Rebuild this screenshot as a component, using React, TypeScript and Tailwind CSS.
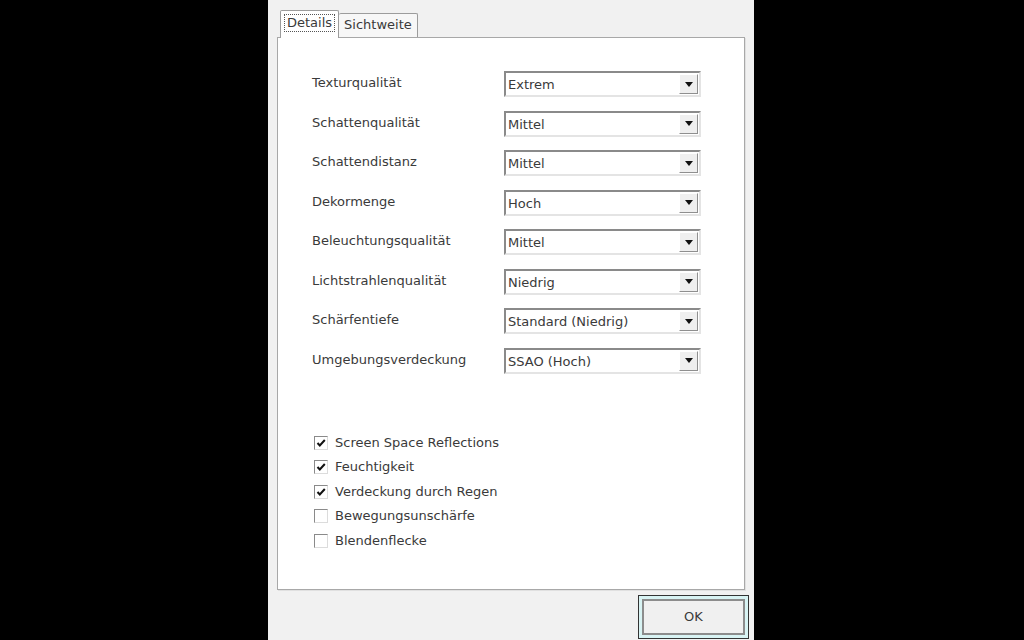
import React from 'react';

const selects: Array<{ label: string; value: string }> = [
  { label: 'Texturqualität', value: 'Extrem' },
  { label: 'Schattenqualität', value: 'Mittel' },
  { label: 'Schattendistanz', value: 'Mittel' },
  { label: 'Dekormenge', value: 'Hoch' },
  { label: 'Beleuchtungsqualität', value: 'Mittel' },
  { label: 'Lichtstrahlenqualität', value: 'Niedrig' },
  { label: 'Schärfentiefe', value: 'Standard (Niedrig)' },
  { label: 'Umgebungsverdeckung', value: 'SSAO (Hoch)' },
];

const checks: Array<{ label: string; checked: boolean }> = [
  { label: 'Screen Space Reflections', checked: true },
  { label: 'Feuchtigkeit', checked: true },
  { label: 'Verdeckung durch Regen', checked: true },
  { label: 'Bewegungsunschärfe', checked: false },
  { label: 'Blendenflecke', checked: false },
];

const Dropdown: React.FC<{ value: string }> = ({ value }) => (
  <div className="w-[197px] h-[26px] flex border-2 border-t-[#8a8a8a] border-l-[#8a8a8a] border-b-[#e4e4e4] border-r-[#e4e4e4] bg-white">
    <div className="flex-1 flex items-center pl-[2px] pt-[2px] text-[13px] text-[#3a3a3a]">{value}</div>
    <div className="w-[19px] m-[1px] flex items-center justify-center bg-[#efefef] border border-t-white border-l-white border-b-[#8f8f8f] border-r-[#8f8f8f]">
      <svg width="8" height="5" viewBox="0 0 8 5">
        <path d="M0 0h8L4 5z" fill="#111" />
      </svg>
    </div>
  </div>
);

const CheckBox: React.FC<{ checked: boolean }> = ({ checked }) => (
  <div className="w-[14px] h-[14px] border border-t-[#8a8a8a] border-l-[#8a8a8a] border-b-[#dcdcdc] border-r-[#dcdcdc] bg-white flex items-center justify-center">
    {checked && (
      <svg width="10" height="10" viewBox="0 0 10 10">
        <path d="M1.5 5l2.3 2.5L8.8 2" fill="none" stroke="#111" strokeWidth="2" />
      </svg>
    )}
  </div>
);

export default function App() {
  return (
    <div className="w-[1024px] h-[640px] bg-black flex" style={{ fontFamily: '"DejaVu Sans", Tahoma, sans-serif' }}>
      <div className="ml-[268px] w-[486px] h-full bg-[#f1f1f1] flex flex-col px-[9px]">
        {/* Tabs */}
        <div className="flex items-end h-[37px] pl-[3px] relative z-10">
          <div className="h-[28px] bg-white border border-b-0 border-[#9c9c9c] rounded-t-[2px] px-[3px] pt-[3px] mb-[-1px]">
            <div className="border border-dotted border-[#555] px-[2px] text-[13px] text-[#3a3a3a] leading-[16px]">Details</div>
          </div>
          <div className="h-[24px] bg-[#f7f7f7] border border-b-0 border-l-0 border-[#9c9c9c] rounded-t-[2px] px-[5px] pt-[3px] text-[13px] text-[#3a3a3a] leading-[16px]">
            Sichtweite
          </div>
        </div>

        {/* Tab panel */}
        <div className="h-[553px] bg-white border border-[#a8a8a8] shadow-[1px_1px_0_#e0e0e0] pl-[34px] pt-[33px]">
          <div className="flex flex-col gap-[13.5px]">
            {selects.map(s => (
              <div key={s.label} className="flex items-center">
                <div className="w-[192px] text-[13px] text-[#3a3a3a] -mt-[2px]">{s.label}</div>
                <Dropdown value={s.value} />
              </div>
            ))}
          </div>

          <div className="mt-[62px] flex flex-col gap-[10.5px] pl-[2px]">
            {checks.map(c => (
              <div key={c.label} className="flex items-center gap-[7px] h-[14px]">
                <CheckBox checked={c.checked} />
                <span className="text-[13px] text-[#3a3a3a]">{c.label}</span>
              </div>
            ))}
          </div>
        </div>

        {/* Footer */}
        <div className="flex justify-end mt-[5px] -mr-[4px]">
          <div className="w-[111px] h-[44px] border border-[#333] bg-[#d8f3f3] p-[3px]">
            <button className="w-full h-full bg-[#f0f0f0] border-2 border-[#8c8c8c] text-[13px] text-[#3a3a3a]">OK</button>
          </div>
        </div>
      </div>
    </div>
  );
}
